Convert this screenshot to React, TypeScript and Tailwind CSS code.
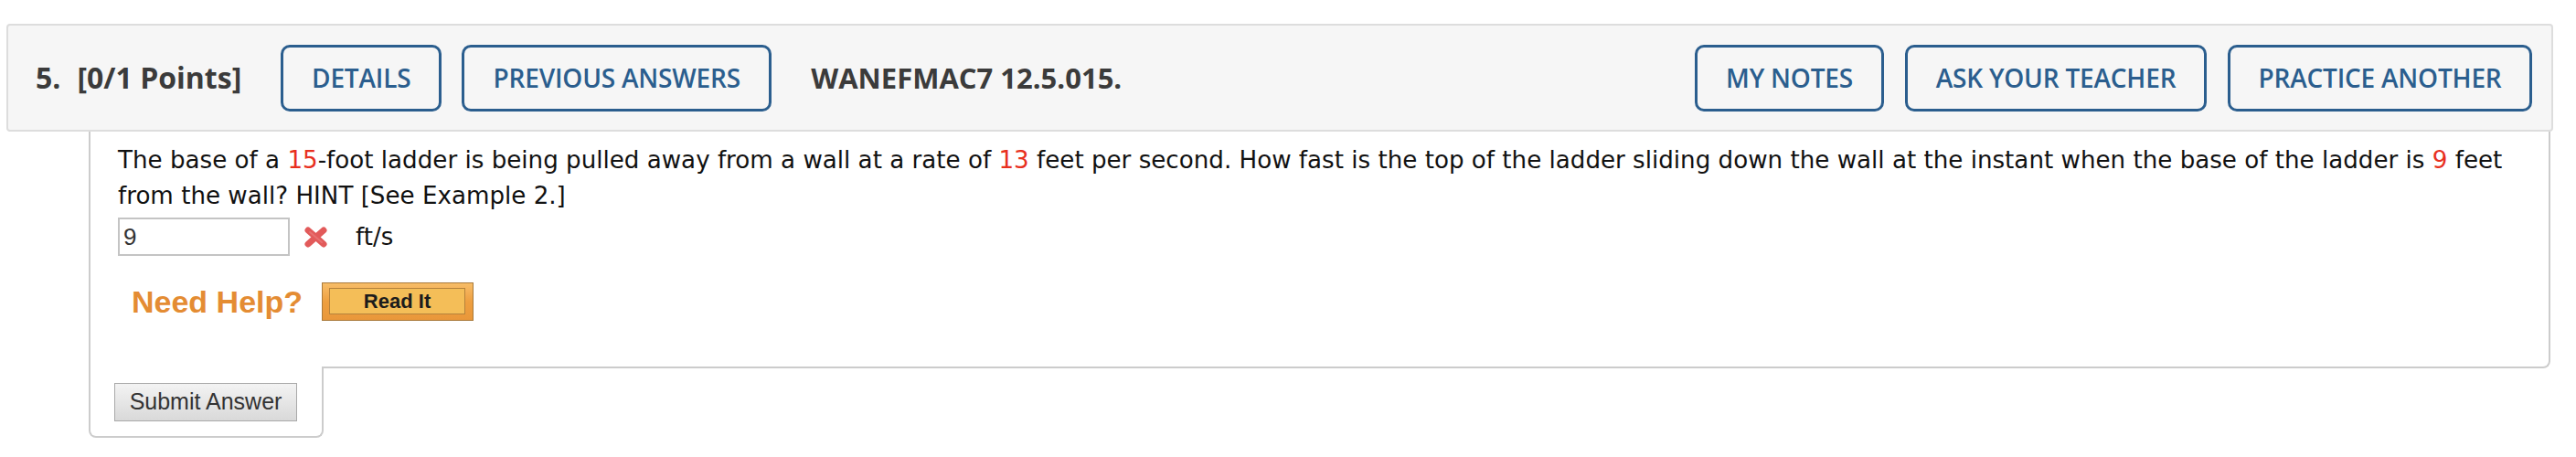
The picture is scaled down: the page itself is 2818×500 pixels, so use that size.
import React from "react";

function HeaderBtn({ w, children }: { w: string; children: React.ReactNode }) {
  return (
    <div
      className={`${w} h-[73px] flex items-center justify-center border-[3px] border-[#2b5e8e] rounded-[10px] text-[#2b5e8e] text-[28px] leading-none font-semibold tracking-[-0.2px]`}
    >
      {children}
    </div>
  );
}

function Red({ children }: { children: React.ReactNode }) {
  return <span className="text-[#e8301e]">{children}</span>;
}

export default function App() {
  return (
    <div className="w-[2818px] h-[500px] bg-white pt-[26px] pl-[7px]">
      <div className="w-[2786px]">
        <div
          className="flex items-center h-[118px] bg-[#f6f6f6] border-2 border-[#dddddd] rounded-[4px] pl-[30px] pr-[21px]"
          style={{ fontFamily: '"Open Sans", sans-serif' }}
        >
          <span className="text-[32px] leading-none font-bold text-[#3b3b3b]">5.</span>
          <span className="ml-[18px] text-[32px] leading-none font-bold text-[#3b3b3b]">[0/1 Points]</span>
          <div className="ml-[43px] flex gap-[22px]">
            <HeaderBtn w="w-[176px]">DETAILS</HeaderBtn>
            <HeaderBtn w="w-[339px]">PREVIOUS ANSWERS</HeaderBtn>
          </div>
          <span className="ml-[43px] text-[31px] leading-none font-bold text-[#3b3b3b]">WANEFMAC7 12.5.015.</span>
          <div className="ml-auto flex gap-[23px]">
            <HeaderBtn w="w-[207px]">MY NOTES</HeaderBtn>
            <HeaderBtn w="w-[330px]">ASK YOUR TEACHER</HeaderBtn>
            <HeaderBtn w="w-[333px]">PRACTICE ANOTHER</HeaderBtn>
          </div>
        </div>

        <div className="ml-[90px] w-[2693px]">
          <div className="h-[259px] border-l-2 border-r-2 border-b-2 border-[#cccccc] rounded-br-[8px] pl-[30px] pr-[20px] pt-[12px]">
            <p
              className="text-[26.15px] leading-[39px] text-[#111111]"
              style={{ fontFamily: '"DejaVu Sans", Verdana, sans-serif' }}
            >
              The base of a <Red>15</Red>-foot ladder is being pulled away from a wall at a rate of <Red>13</Red> feet
              per second. How fast is the top of the ladder sliding down the wall at the instant when the base of the
              ladder is <Red>9</Red> feet from the wall? HINT [See Example 2.]
            </p>
            <div className="mt-[4px] flex items-center">
              <div
                className="w-[188px] h-[42px] border-2 border-[#c4c4c4] flex items-center pl-[4px] text-[26px] text-[#333333]"
                style={{ fontFamily: '"Liberation Sans", Arial, sans-serif' }}
              >
                9
              </div>
              <svg className="ml-[15px]" width="27" height="25" viewBox="0 0 27 25">
                <line x1="5" y1="5" x2="22" y2="20" stroke="#e25a5a" strokeWidth="7" strokeLinecap="round" />
                <line x1="22" y1="5" x2="5" y2="20" stroke="#e25a5a" strokeWidth="7" strokeLinecap="round" />
                <line x1="7" y1="7" x2="20" y2="18" stroke="#ec8080" strokeWidth="2" strokeLinecap="round" opacity="0.6" />
              </svg>
              <span
                className="ml-[30px] text-[26px] text-[#111111]"
                style={{ fontFamily: '"DejaVu Sans", Verdana, sans-serif' }}
              >
                ft/s
              </span>
            </div>
            <div className="mt-[29px] ml-[15px] flex items-center">
              <span
                className="text-[34px] font-bold text-[#e48c33] leading-none"
                style={{ fontFamily: '"Liberation Sans", Arial, sans-serif' }}
              >
                Need Help?
              </span>
              <div className="ml-[21px] w-[166px] h-[42px] border border-[#a9793a] bg-linear-to-b from-[#f7bd68] via-[#ee9f40] to-[#e9973a] pl-[7px] pr-[8px] pt-[5px] pb-[6px]">
                <div
                  className="w-full h-full border border-[#b5823c] bg-[#f4be58] flex items-center justify-center text-[22px] font-bold text-[#1c1c1c]"
                  style={{ fontFamily: '"Liberation Sans", Arial, sans-serif' }}
                >
                  Read It
                </div>
              </div>
            </div>
          </div>
          <div className="-mt-[2px] w-[257px] h-[78px] bg-white border-l-2 border-r-2 border-b-2 border-[#cccccc] rounded-b-[8px] pl-[26px] pt-[18px]">
            <div
              className="w-[200px] h-[42px] border border-[#a9a9a9] bg-linear-to-b from-[#f3f3f3] to-[#d9d9d9] flex items-center justify-center text-[25px] text-[#333333]"
              style={{ fontFamily: '"Liberation Sans", Arial, sans-serif' }}
            >
              Submit Answer
            </div>
          </div>
        </div>
      </div>
    </div>
  );
}
